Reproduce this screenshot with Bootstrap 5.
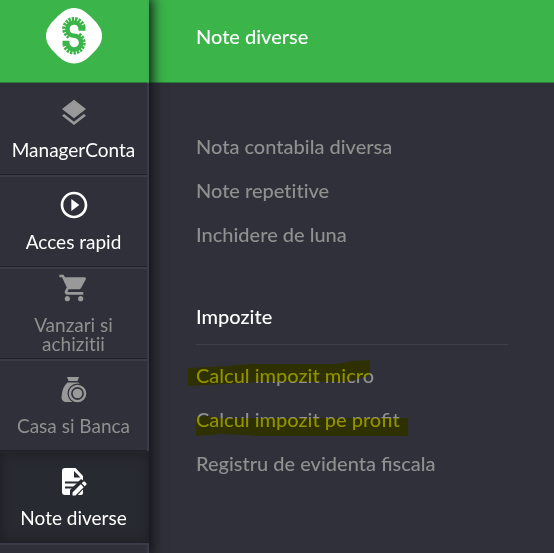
<!DOCTYPE html>
<html lang="ro">
<head>
<meta charset="utf-8">
<meta name="viewport" content="width=device-width, initial-scale=1">
<title>Note diverse</title>
<link href="https://cdn.jsdelivr.net/npm/bootstrap@5.3.0/dist/css/bootstrap.min.css" rel="stylesheet">
<style>
  body { font-family: Lato, "Liberation Sans", sans-serif; font-size: 20px; line-height: 24px; background: #2f3039; color: #909090; font-variant-ligatures: none; }
  .side { width: 149px; background: #2f3039; border-right: 2px solid #393b46; box-shadow: 0 0 12px 3px #101116; z-index: 2; }
  .brand, .topbar { height: 83px; background: #3bb54a; border-bottom: 1px solid #2c7a3c; }
  .brand { margin-right: -2px; border-right: 2px solid #45a955; padding-top: 8px; }
  .tile { height: 92px; padding: 12px 4px 0; font-size: 19px; line-height: 19px; color: #909090; border-top: 2px solid #393b46; border-bottom: 1px solid #202128; }
  .tile:first-child { border-top-color: #2f3039; }
  .tile-label { margin-top: 11px; }
  .tile-two { padding-top: 3px; }
  .tile-row { display: block; }
  .tile.lit, .tile.active { color: #fff; }
  .tile.active { background: #282a31; border-top-color: #24252b; margin-right: -2px; padding-right: 6px; box-shadow: inset 0 0 12px #1d1e23; }
  .topbar, .inner { padding-left: 47px; padding-right: 46px; font-weight: 500; }
  .topbar { padding-bottom: 10px; }
  .inner { padding-top: 41px; }
  .entry { color: #909090; line-height: 44px; }
  .joined { font-variant-ligatures: normal; }
  .group-title { font-size: 20px; line-height: 24px; font-weight: 500; margin-top: 48px; padding-bottom: 16px; border-bottom: 1px solid #3d3e4b; }
  .marker { left: -8px; top: 0; mix-blend-mode: multiply; pointer-events: none; }
</style>
<script src="https://cdn.jsdelivr.net/npm/bootstrap@5.3.0/dist/js/bootstrap.bundle.min.js"></script>
</head>
<body>
<div class="d-flex min-vh-100 vh-100 overflow-hidden">
  <nav class="side flex-shrink-0 position-relative" aria-label="Meniu principal">
    <a href="#" class="brand d-flex justify-content-center align-items-start" aria-label="Acasa">
      <svg width="56" height="56" viewBox="0 0 56 56" fill="none">
        <path d="M28 0C35 0 40 4 46 10C52 16 56 21 56 28C56 35 52 40 46 46C40 52 35 55.500 28 55.500C21 55.500 16 52 10 46C4 40 0 35 0 28C0 21 4 16 10 10C16 4 21 0 28 0Z" fill="#fff"/>
        <g stroke="#3bb54a">
          <path d="M39.500 20.500H34.600A6.600 6.600 0 1 0 28 27.800A6.900 6.900 0 1 1 21.300 35H16.500" stroke-width="4.500"/>
          <path d="M37.500 19A9.700 9.700 0 1 0 23 29" stroke-width="4" stroke-dasharray="2.300 1"/>
          <path d="M33 26.500A9.700 9.700 0 1 1 18.500 37" stroke-width="4" stroke-dasharray="2.300 1"/>
        </g>
      </svg>
    </a>
    <div class="d-flex flex-column text-center">
      <a href="#" class="tile lit d-flex flex-column align-items-center text-decoration-none">
        <svg width="32" height="32" viewBox="0 0 24 24" fill="#999"><path d="M11.990 18.540 4.620 12.810 3 14.070l9 7 9-7-1.630-1.270-7.380 5.740zM12 16l7.360-5.730L21 9l-9-7-9 7 1.630 1.270L12 16z"/></svg>
        <span class="tile-label">ManagerConta</span>
      </a>
      <a href="#" class="tile lit d-flex flex-column align-items-center text-decoration-none">
        <svg width="32" height="32" viewBox="0 0 24 24" fill="#fff"><path d="M10 16.500l6-4.500-6-4.500v9zM12 2C6.480 2 2 6.480 2 12s4.480 10 10 10 10-4.480 10-10S17.520 2 12 2zm0 18c-4.410 0-8-3.590-8-8s3.590-8 8-8 8 3.590 8 8-3.590 8-8 8z"/></svg>
        <span class="tile-label">Acces rapid</span>
      </a>
      <a href="#" class="tile tile-two d-flex flex-column align-items-center text-decoration-none">
        <svg width="32" height="32" viewBox="0 0 24 24" fill="#999"><path d="M7 18c-1.100 0-1.990.900-1.990 2S5.900 22 7 22s2-.900 2-2-.900-2-2-2zM1 2v2h2l3.600 7.590-1.350 2.450c-.160.280-.250.610-.250.960 0 1.100.900 2 2 2h12v-2H7.420c-.140 0-.250-.110-.250-.250l.030-.120.900-1.630h7.450c.750 0 1.410-.410 1.750-1.030l3.580-6.490A1 1 0 0 0 20 4H5.210l-.940-2H1zm16 16c-1.100 0-1.990.900-1.990 2s.890 2 1.990 2 2-.900 2-2-.900-2-2-2z"/></svg>
        <span class="tile-label"><span class="tile-row">Vanzari si</span> <span class="tile-row">achizitii</span></span>
      </a>
      <a href="#" class="tile d-flex flex-column align-items-center text-decoration-none">
        <svg width="32" height="32" viewBox="0 0 32 32">
          <path d="M9 4H21L19.500 8H10.500ZM9.500 9.500H20.500L24 14V29H7Q3.500 28 3.500 24Q4 14 9.500 9.500Z" fill="#999"/>
          <circle cx="19.500" cy="20.500" r="10" fill="#2f3039"/>
          <circle cx="19.500" cy="20.500" r="7.600" fill="#2f3039" stroke="#999" stroke-width="2.400"/>
          <circle cx="19.500" cy="20.500" r="4.800" fill="#999"/>
        </svg>
        <span class="tile-label">Casa si Banca</span>
      </a>
      <a href="#" class="tile active d-flex flex-column align-items-center text-decoration-none" aria-current="page">
        <svg width="32" height="32" viewBox="0 0 32 32">
          <path d="M7 3H17.500L25 11V28Q25 30 23 30H7Q4 30 4 27V6Q4 3 7 3Z" fill="#fff"/>
          <path d="M16 6V12.500H22.500ZM7 16.500H21V18.500H7ZM7 21.500H17V23.500H7Z" fill="#282a31"/>
          <path d="M12 31V25L23 14L30 19L18 32Z" fill="#282a31"/>
          <path d="M14.500 27.500L22.700 19.300L25.700 22.300L17.500 30.500H14.500ZM23.700 18.300L25.300 16.700Q26 16 26.800 16.700L28.300 18.200Q29 19 28.300 19.700L26.700 21.300Z" fill="#fff"/>
        </svg>
        <span class="tile-label">Note diverse</span>
      </a>
      <div class="tile"></div>
    </div>
  </nav>

  <main class="flex-grow-1">
    <header class="topbar d-flex align-items-center text-white">Note diverse</header>
    <div class="inner">
      <ul class="list-unstyled mb-0">
        <li><a href="#" class="entry d-block text-decoration-none">Nota contabila diversa</a></li>
        <li><a href="#" class="entry d-block text-decoration-none">Note repetitive</a></li>
        <li><a href="#" class="entry d-block text-decoration-none">Inchidere de luna</a></li>
      </ul>
      <h2 class="group-title text-white mb-2">Impozite</h2>
      <ul class="list-unstyled mb-0">
        <li class="position-relative"><a href="#" class="entry d-block text-decoration-none">Calcul impozit micro</a>
          <svg class="marker position-absolute" width="224" height="44" fill="#ff0" aria-hidden="true"><path d="M0 15L39 13L62 11H150L164 8L182 7V23L157 29H68L36 31L0 33Z"/></svg></li>
        <li class="position-relative"><a href="#" class="entry joined d-block text-decoration-none">Calcul impozit pe profit</a>
          <svg class="marker position-absolute" width="224" height="44" fill="#ff0" aria-hidden="true"><path d="M8 20L18 19L32 21H220V39H67L58 38L34 37L8 39Z"/></svg></li>
        <li><a href="#" class="entry joined d-block text-decoration-none">Registru de evidenta fiscala</a></li>
      </ul>
    </div>
  </main>
</div>
</body>
</html>
